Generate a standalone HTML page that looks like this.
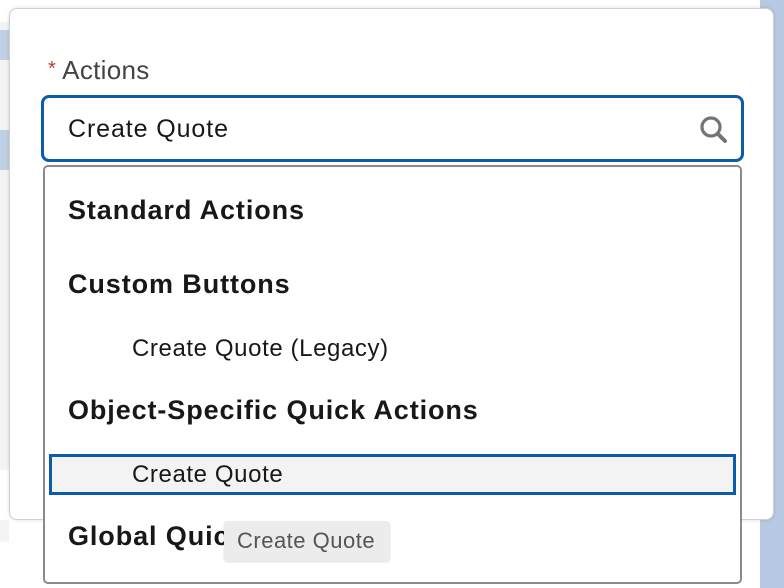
<!DOCTYPE html>
<html><head><style>
body{margin:0;width:784px;height:588px;overflow:hidden;background:#fff;font-family:"Liberation Sans",sans-serif;position:relative}
.a{position:absolute}
.h{position:absolute;left:68px;font-size:27px;letter-spacing:0.9px;font-weight:bold;color:#181818}
</style></head><body>
<div class="a" style="left:0;top:22px;width:9px;height:520px;background:#f3f3f3"></div>
<div class="a" style="left:0;top:30px;width:9px;height:30px;background:#bfcfe4"></div>
<div class="a" style="left:0;top:130px;width:9px;height:40px;background:#bfcfe4"></div>
<div class="a" style="left:0;top:470px;width:9px;height:50px;background:#fff"></div>
<div class="a" style="left:760px;top:0;width:24px;height:588px;background:#b7c9e2"></div>
<div class="a" style="left:9px;top:8px;width:763px;height:510px;background:#fff;border:1px solid #d0d0d0;border-radius:8px;box-shadow:0 0 3px rgba(0,0,0,.15)"></div>
<div class="a" style="left:48px;top:55px;font-size:26px;letter-spacing:0.3px;color:#444"><span style="color:#c23934;font-size:20px;vertical-align:4px">*</span> Actions</div>
<div class="a" style="left:41px;top:95px;width:697px;height:61px;border:3px solid #0b5cab;border-radius:8px;background:#fff"></div>
<div class="a" style="left:68px;top:115px;font-size:25px;letter-spacing:0.9px;color:#181818">Create Quote</div>
<svg class="a" style="left:698px;top:114px" width="32" height="32" viewBox="0 0 32 32"><circle cx="13" cy="13" r="9" fill="none" stroke="#747474" stroke-width="3.2"/><path d="M19.5 19.5 L27 27" stroke="#747474" stroke-width="4" stroke-linecap="round"/></svg>
<div class="a" style="left:43px;top:165px;width:695px;height:415px;border:2px solid #8a8a8a;border-radius:5px;background:#fff"></div>
<div class="h" style="top:195px">Standard Actions</div>
<div class="h" style="top:269px">Custom Buttons</div>
<div class="a" style="left:132px;top:335px;font-size:24px;letter-spacing:0.6px;color:#181818">Create Quote (Legacy)</div>
<div class="h" style="top:395px">Object-Specific Quick Actions</div>
<div class="a" style="left:49px;top:454px;width:681px;height:35px;border:3px solid #0b5cab;background:#f3f3f3"></div>
<div class="a" style="left:132px;top:461px;font-size:24px;letter-spacing:0.6px;color:#181818">Create Quote</div>
<div class="h" style="top:521px">Global Quic</div>
<div class="a" style="left:224px;top:521px;width:166px;height:40px;background:#ececec;border-radius:4px;box-shadow:0 1px 2px rgba(0,0,0,.15)"></div>
<div class="a" style="left:237px;top:528px;font-size:22px;letter-spacing:0.5px;color:#555">Create Quote</div>
</body></html>
